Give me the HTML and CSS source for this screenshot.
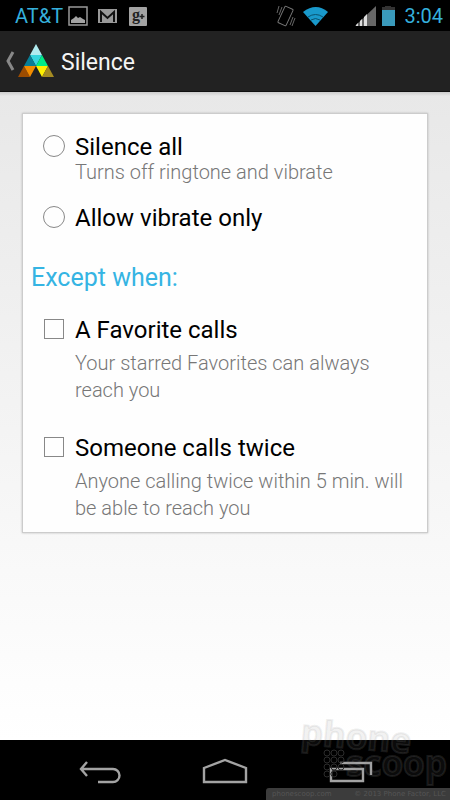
FILE: index.html
```html
<!DOCTYPE html>
<html lang="en">
<head>
<meta charset="utf-8">
<meta name="viewport" content="width=device-width, initial-scale=1">
<title>Silence</title>
<link rel="stylesheet" href="styles.css">
</head>
<body>
<div class="status">
  <span class="carrier">AT&amp;T</span>
  <svg class="notices" width="80" height="22" viewBox="0 0 80 22" aria-hidden="true">
    <rect x="1" y="2" width="18" height="18" fill="none" stroke="#999" stroke-width="1.500"/>
    <path d="M3 18v-3l3-2 2-2 2 2 2-1 3 2 2 1v3z" fill="#a3a3a3"/>
    <rect x="30" y="4" width="19" height="14" fill="#999"/>
    <path d="M33 17V7l6.500 6L46 7v10" fill="none" stroke="#111" stroke-width="2"/>
    <rect x="61" y="2" width="18" height="19" rx="1" fill="#a3a3a3"/>
    <text x="64" y="15" class="gplus">g</text>
    <path d="M74 9v5M71.500 11.500h5" stroke="#222" stroke-width="1.500"/>
  </svg>
  <svg class="signals" width="120" height="22" viewBox="0 0 120 22" aria-hidden="true">
    <g fill="none" stroke="#666" stroke-width="1">
      <rect x="5" y="2" width="9" height="18" rx="1" transform="rotate(25 9.500 11)" stroke="#777"/>
      <path d="M1 8L3 1M3 10L6 2M14 20l3-8M16 21l3-8"/>
    </g>
    <path d="M27 7q13-10 25 0L39.500 21z" fill="#1999cb"/>
    <path d="M32 12q7.500-5 15 0M35 15q4.500-3 9 0" fill="none" stroke="#0a526f"/>
    <path d="M79 21L100 1v20z" fill="#666"/>
    <path d="M80 21v-1l2-2v3zM84 21v-5l2-2v7zM88 21v-9l3-3v12z" fill="#ddd"/>
    <path d="M106 4h3V1h6v3h4v17h-13z" fill="#3a9abb"/>
    <path d="M106 5V2h3V1h6v1h4v3z" fill="#333"/>
  </svg>
  <time class="clock">3:04</time>
</div>
<header class="bar">
  <a class="back" href="#" aria-label="Back">
    <svg width="50" height="34" viewBox="0 0 50 34" aria-hidden="true">
      <path d="M8 8L3 17l5 9" fill="none" stroke="#888" stroke-width="3"/>
      <path d="M31 0l6 11H25z" fill="#b0ebef"/>
      <path d="M25 11h12l-6 11z" fill="#35d5dd"/>
      <path d="M25 11l6 11H19z" fill="#087e96"/>
      <path d="M37 11l6 11H31z" fill="#00ec87"/>
      <path d="M19 22l-6 11h12z" fill="#9c4c00"/>
      <path d="M19 22h12l-6 11z" fill="#f28c00"/>
      <path d="M31 22h12l-6 11z" fill="#fff000"/>
      <path d="M43 22l6 11H37z" fill="#a58b22"/>
    </svg>
  </a>
  <h1>Silence</h1>
</header>
<main>
  <form class="card">
    <label class="option" for="all">
      <input type="radio" name="mode" id="all">
      <span class="words"><span class="title">Silence all</span><span class="note">Turns off ringtone and vibrate</span></span>
    </label>
    <label class="option second" for="vibrate">
      <input type="radio" name="mode" id="vibrate">
      <span class="words"><span class="title">Allow vibrate only</span></span>
    </label>
    <h2>Except when:</h2>
    <label class="option exception" for="favorite">
      <input type="checkbox" id="favorite">
      <span class="words"><span class="title">A Favorite calls</span><span class="note">Your starred Favorites can always reach you</span></span>
    </label>
    <label class="option exception" for="twice">
      <input type="checkbox" id="twice">
      <span class="words"><span class="title">Someone calls twice</span><span class="note">Anyone calling twice within 5 min. will be able to reach you</span></span>
    </label>
  </form>
</main>
<nav class="navigation" aria-label="System">
  <button type="button" aria-label="Back"><svg width="46" height="28" viewBox="0 0 46 28"><path d="M10 4L4 11l6 7M4 11h32a6 6 0 0 1 0 13H21"/></svg></button>
  <button type="button" aria-label="Home"><svg width="46" height="28" viewBox="0 0 46 28"><path d="M2 10L23 2l21 8v14H2z"/></svg></button>
  <button type="button" aria-label="Recent apps"><svg width="46" height="28" viewBox="0 0 46 28"><path d="M4 11h32v12H4zM13 5h31v12"/></svg></button>
</nav>
<div class="watermark">
  <svg width="150" height="80" viewBox="0 0 150 80" aria-label="phone scoop">
    <text x="0" y="32" class="brand" transform="rotate(5 0 32)">phone</text>
    <text x="46" y="64" class="brand">scoop</text>
    <g class="dots"><circle cx="27" cy="41" r="3"/><circle cx="34" cy="41" r="3"/><circle cx="41" cy="41" r="3"/><circle cx="27" cy="48" r="3"/><circle cx="34" cy="48" r="3"/><circle cx="41" cy="48" r="3"/><circle cx="27" cy="55" r="3"/><circle cx="34" cy="55" r="3"/><circle cx="41" cy="55" r="3"/><circle cx="27" cy="62" r="3"/><circle cx="34" cy="62" r="3"/></g>
  </svg>
</div>
<div class="copyright"><span>phonescoop.com</span><span>© 2013 Phone Factor, LLC</span></div>
</body>
</html>
```

FILE: styles.css
```css
* { box-sizing: border-box; }
body {
  display: flex;
  flex-direction: column;
  min-height: 100vh;
  margin: 0;
  position: relative;
  background: #000;
  font-family: Roboto, sans-serif;
}
.status {
  display: flex;
  align-items: center;
  height: 31px;
  padding: 0 7px 0 15px;
  background: #000;
  color: #35b0dc;
  font-size: 20px;
}
.notices { margin-left: 5px; }
.signals { margin-left: auto; }
.clock { margin-left: 8px; }
.gplus { font: bold 16px "Liberation Serif", serif; fill: #222; }
.bar {
  display: flex;
  align-items: center;
  height: 61px;
  padding: 0 5px;
  border-bottom: 1px solid #111;
  background: #222;
  color: #f4f4f4;
}
.back { display: flex; }
.bar h1 { margin: 2px 0 0 6px; font-size: 23px; font-weight: 400; }
main {
  flex: 1;
  padding: 21px 22px;
  background: linear-gradient(#ccc, transparent 4px), linear-gradient(#e8e8e8, #fff);
}
.card {
  padding: 18px 8px 10px;
  border: 1px solid #ccc;
  background: #fefefe;
  box-shadow: 0 0 2px #bbb;
}
.option { display: flex; gap: 10px; padding-left: 12px; }
.option input {
  flex: none;
  appearance: none;
  width: 22px;
  height: 22px;
  margin: 3px 0 0;
  border: 1px solid #888;
  background: transparent;
}
.option input[type="radio"] { border-radius: 50%; }
.option input[type="checkbox"] { width: 20px; height: 20px; margin: 4px 1px 0; }
.words { display: flex; flex-direction: column; }
.title { color: #000; font-size: 24px; line-height: 30px; }
.note { color: #777; font-size: 20px; font-weight: 300; line-height: 21px; }
.second { margin-top: 20px; }
.card h2 { margin: 30px 0 22px; color: #35b4e3; font-size: 25px; font-weight: 400; line-height: 30px; }
.exception + .exception { margin-top: 29px; }
.exception .note { margin-top: 5px; line-height: 27px; }
.navigation { display: flex; justify-content: center; gap: 79px; height: 60px; background: #000; }
.navigation button { display: flex; align-items: center; padding: 4px 0 0; border: 0; background: none; }
.navigation path { fill: none; stroke: #a3a3a3; stroke-width: 2.400; }
.watermark { position: absolute; right: 0; bottom: 8px; line-height: 0; pointer-events: none; }
.brand { font: bold 35px "Open Sans", sans-serif; fill: #77777718; stroke: #99999928; stroke-width: 2; }
.dots { fill: none; stroke: #2c2c2c; stroke-width: 1; }
.copyright {
  position: absolute;
  right: 0;
  bottom: 0;
  display: flex;
  justify-content: space-between;
  width: 184px;
  padding: 0 4px 0 6px;
  border-radius: 3px 0 0;
  background: #3c3c3c;
  color: #555;
  font: 7px/12px "DejaVu Sans", sans-serif;
  white-space: nowrap;
}
```
